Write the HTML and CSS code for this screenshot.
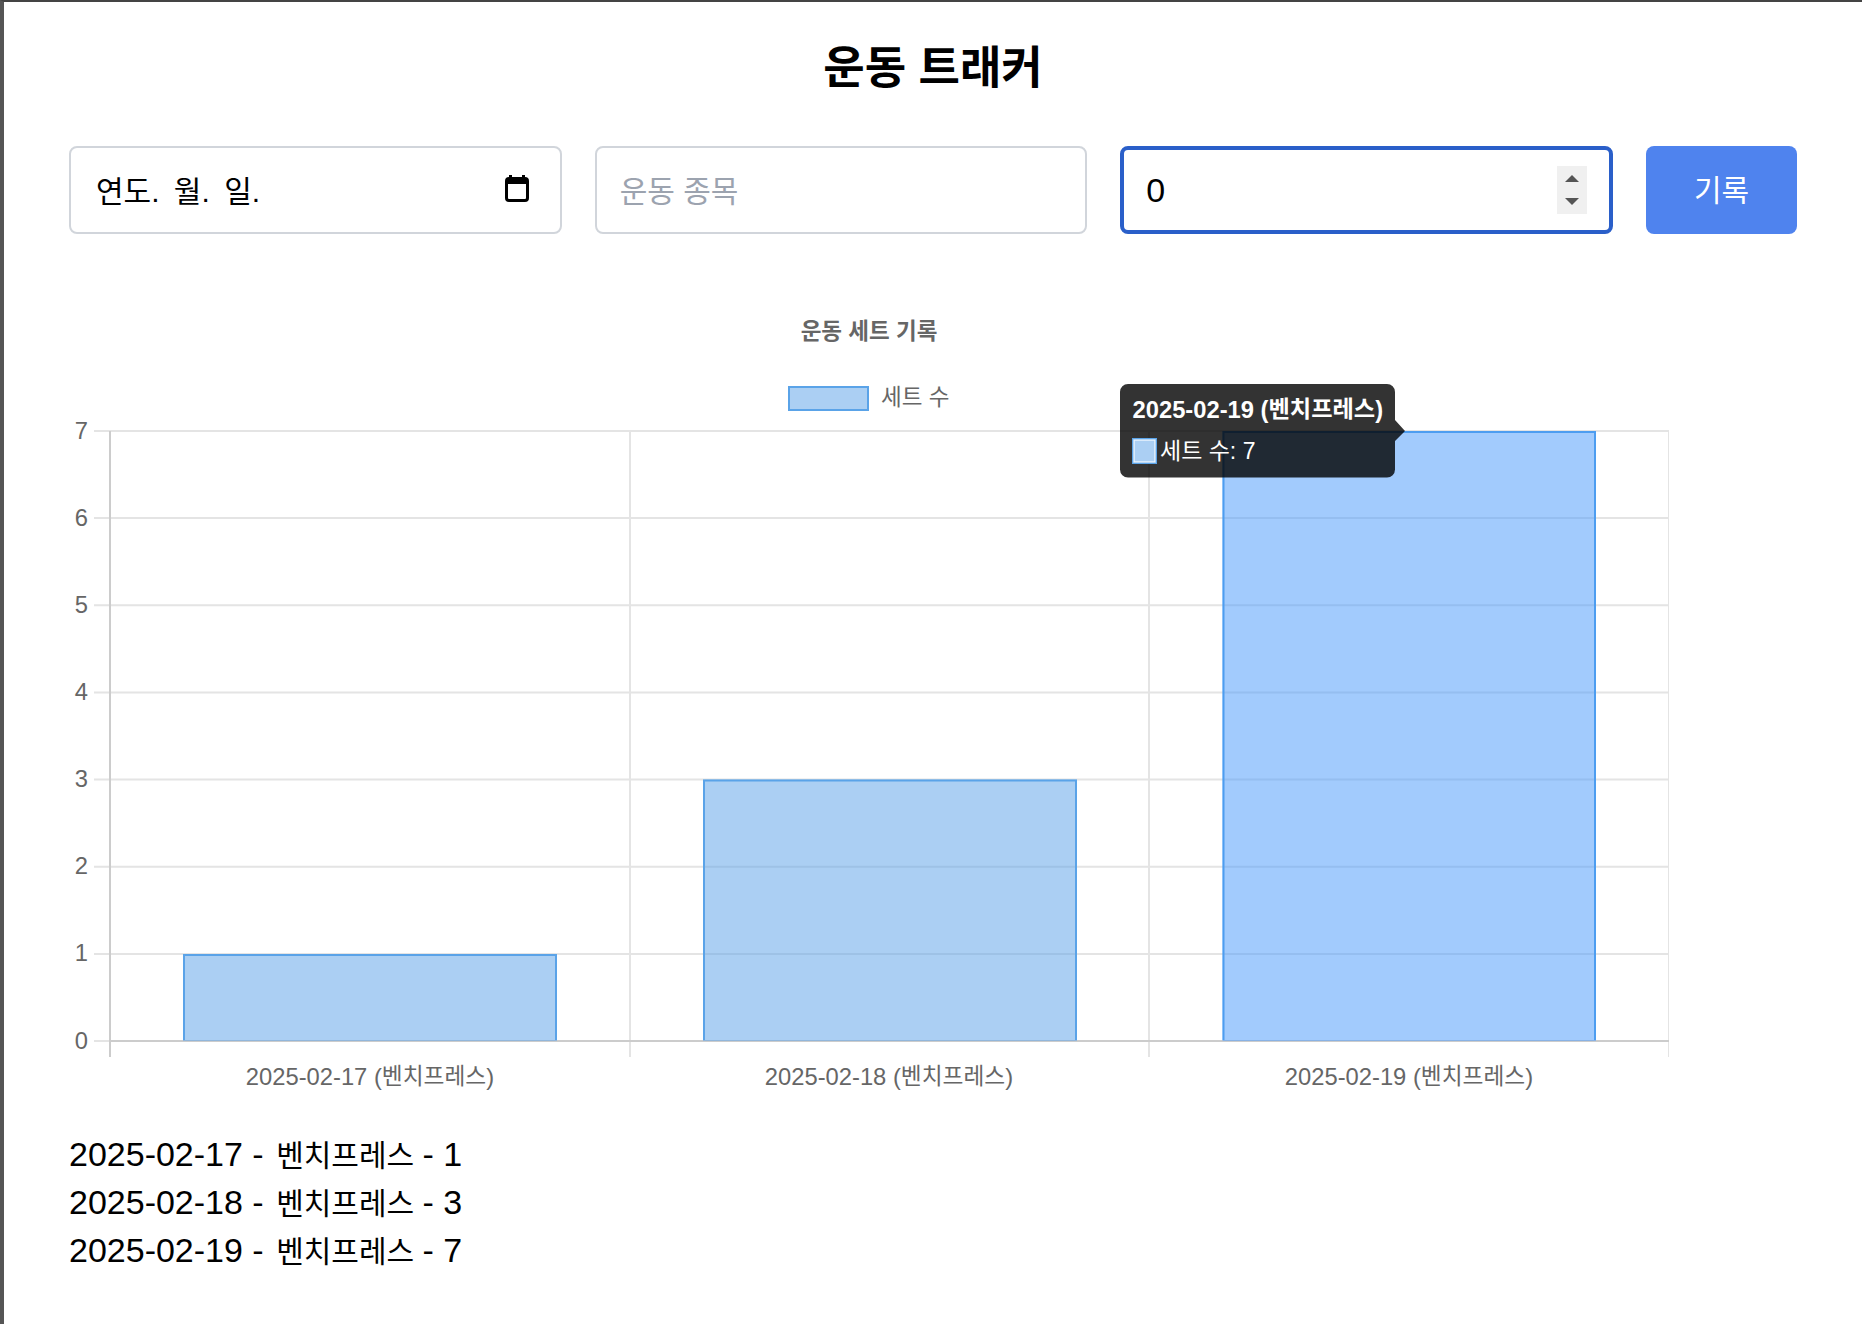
FILE: index.html
```html
<!DOCTYPE html>
<html lang="ko">
<head>
    <meta charset="UTF-8">
    <meta name="viewport" content="width=device-width, initial-scale=1.0">
    <title>운동 트래커</title>
    <link rel="stylesheet" href="styles.css">
</head>
<body>

<div class="container">
    <h1>운동 트래커</h1>

    <!-- 입력 폼 -->
    <form class="entry-form">
        <label class="field">
            <input class="date-input" type="text" value="연도. 월. 일." aria-label="날짜">
            <svg class="calendar-icon" width="24" height="27" viewBox="0 0 24 27">
                <path d="M4 0h3v4H4zM17 0h3v4h-3z" fill="#000"/>
                <rect x="1.5" y="3.5" width="21" height="22" rx="2.5" fill="#fff" stroke="#000" stroke-width="3"/>
                <rect x="1.5" y="3.5" width="21" height="5.5" fill="#000"/>
            </svg>
        </label>
        <label class="field name-field">
            <input type="text" placeholder="운동 종목">
        </label>
        <label class="field focused">
            <input class="number-input" type="text" value="0" aria-label="세트 수">
            <span class="spinner">
                <svg width="14" height="7" viewBox="0 0 14 7"><path d="M7 0l7 7H0z" fill="#555"/></svg>
                <svg width="14" height="7" viewBox="0 0 14 7"><path d="M0 0h14L7 7z" fill="#555"/></svg>
            </span>
        </label>
        <button type="button" class="submit-btn">기록</button>
    </form>

    <!-- 차트 -->
    <svg class="chart" width="1600" height="800" viewBox="0 0 1600 800">
        <text class="chart-title" x="800" y="31">운동 세트 기록</text>

        <rect class="bar" x="720" y="87" width="79" height="23"/>
        <text class="legend-label" x="812" y="97">세트 수</text>

        <g class="grid">
            <path d="M25 131H1600M25 218.1H1600M25 305.3H1600M25 392.4H1600M25 479.6H1600M25 566.7H1600M25 653.9H1600M25 741H41"/>
            <path d="M561 131V757M1080 131V757"/>
            <path class="grid-end" d="M1599.5 131V757"/>
        </g>
        <path class="axis" d="M41 131V757M40 741H1600"/>

        <g class="ticks-y">
            <text x="19" y="130">7</text>
            <text x="19" y="217.1">6</text>
            <text x="19" y="304.3">5</text>
            <text x="19" y="391.4">4</text>
            <text x="19" y="478.6">3</text>
            <text x="19" y="565.7">2</text>
            <text x="19" y="652.9">1</text>
            <text x="19" y="740">0</text>
        </g>

        <g class="ticks-x">
            <text x="301" y="776">2025-02-17 (<tspan class="ko">벤치프레스</tspan>)</text>
            <text x="820" y="776">2025-02-18 (<tspan class="ko">벤치프레스</tspan>)</text>
            <text x="1340" y="776">2025-02-19 (<tspan class="ko">벤치프레스</tspan>)</text>
        </g>

        <rect class="bar-fill" x="114" y="654" width="374" height="87"/>
        <path class="bar-line" d="M115 740V655H487V740"/>
        <rect class="bar-fill" x="634" y="479.6" width="374" height="261.4"/>
        <path class="bar-line" d="M635 740V480.6H1007V740"/>
        <rect class="bar-fill hover" x="1153.5" y="131" width="373.5" height="610"/>
        <path class="bar-line hover" d="M1154.5 740V132H1526V740"/>

        <!-- 툴팁 -->
        <path class="tooltip-box" d="M1059 84H1318a8 8 0 0 1 8 8V120L1336 131L1326 141V169.5a8 8 0 0 1-8 8H1059a8 8 0 0 1-8-8V92a8 8 0 0 1 8-8z"/>
        <text class="tooltip-title" x="1063.5" y="109">2025-02-19 (<tspan class="ko">벤치프레스</tspan>)</text>
        <rect class="tooltip-swatch-outer" x="1063" y="138" width="25" height="26"/>
        <rect class="tooltip-swatch" x="1065" y="140" width="21" height="22"/>
        <text class="tooltip-label" x="1091" y="151">세트 수: 7</text>
    </svg>

    <!-- 기록 목록 -->
    <ul class="log-list">
        <li>2025-02-17 - <span class="ko">벤치프레스</span> - 1</li>
        <li>2025-02-18 - <span class="ko">벤치프레스</span> - 3</li>
        <li>2025-02-19 - <span class="ko">벤치프레스</span> - 7</li>
    </ul>
</div>

</body>
</html>
```

FILE: styles.css
```css
* {
    box-sizing: border-box;
}

html, body {
    height: 100%;
}

body {
    margin: 0;
    background-color: #fff;
    border-top: 2px solid #444;
    border-left: 4px solid #555;
    font-family: "Liberation Sans", "Noto Sans CJK KR", sans-serif;
    overflow: hidden;
}

.container {
    padding: 0 65px;
}

h1 {
    margin: 0;
    padding-top: 37px;
    height: 144px;
    font-size: 45px;
    line-height: 60px;
    font-weight: 700;
    text-align: center;
    color: #000;
}

.entry-form {
    display: grid;
    grid-template-columns: repeat(3, minmax(0, 1fr)) 151px;
    gap: 33px;
    height: 88px;
}

.field {
    display: flex;
    align-items: center;
    padding: 0 25px;
    background-color: #fff;
    border: 2px solid #d1d5db;
    border-radius: 8px;
}

.field input {
    flex: 1;
    min-width: 0;
    border: 0;
    padding: 0;
    outline: none;
    background: transparent;
    font: inherit;
    font-size: 30px;
    color: #000;
}

.field input::placeholder {
    color: #9ca3af;
}

.field .date-input {
    word-spacing: 6px;
    padding-bottom: 2px;
}

.name-field {
    padding: 0 23px;
}

.name-field input {
    padding-top: 4px;
}

.field .number-input {
    font-size: 34px;
}

.calendar-icon {
    margin-right: 6px;
    margin-top: -3px;
}

.field.focused {
    border: 4px solid #2a5fc9;
    padding: 0 22px;
}

.spinner {
    display: flex;
    flex-direction: column;
    align-items: center;
    gap: 16px;
    width: 30px;
    height: 48px;
    padding-top: 9px;
    background-color: #f0f0f0;
}

.spinner svg {
    display: block;
}

.submit-btn {
    border: 0;
    border-radius: 8px;
    padding-bottom: 6px;
    background-color: #4f83ee;
    color: #fff;
    font: inherit;
    font-size: 30px;
}

.chart {
    display: block;
    margin-top: 66px;
}

.chart text {
    font-size: 23.75px;
    fill: #666;
}

.chart .ko {
    font-size: 22.7px;
}

.chart .chart-title {
    font-size: 22.5px;
    font-weight: 700;
    text-anchor: middle;
    dominant-baseline: central;
}

.chart .legend-label {
    font-size: 22.5px;
    dominant-baseline: central;
}

.bar {
    fill: #abcff3;
    stroke: #5aa3e8;
    stroke-width: 2;
}

.grid path {
    fill: none;
    stroke: #e4e4e4;
    stroke-width: 2;
}

.grid .grid-end {
    stroke-width: 1;
}

.axis {
    fill: none;
    stroke: #ccc;
    stroke-width: 2;
}

.ticks-y text {
    text-anchor: end;
    dominant-baseline: central;
}

.ticks-x text {
    text-anchor: middle;
    dominant-baseline: central;
}

.bar-fill {
    fill: rgba(87, 159, 231, 0.5);
}

.bar-fill.hover {
    fill: rgba(69, 151, 251, 0.5);
}

.bar-line {
    fill: none;
    stroke: #5aa3e8;
    stroke-width: 2;
}

.bar-line.hover {
    stroke: #4d9df0;
}

.tooltip-box {
    fill: rgba(0, 0, 0, 0.8);
}

.chart .tooltip-title {
    font-weight: 700;
    fill: #fff;
    dominant-baseline: central;
}

.chart .tooltip-title .ko {
    font-size: 23.2px;
    fill: #fff;
}

.chart .tooltip-label {
    font-size: 23px;
    fill: #fff;
    dominant-baseline: central;
}

.tooltip-swatch-outer {
    fill: #5aa3e8;
}

.tooltip-swatch {
    fill: #abcff3;
    stroke: #fff;
    stroke-width: 1.5;
    stroke-opacity: 0.75;
}

.log-list {
    list-style: none;
    margin: 30px 0 0;
    padding: 0;
    font-size: 34px;
    line-height: 48px;
    color: #000;
}

.log-list .ko {
    font-size: 30px;
    line-height: 1;
    margin: 0 -1px 0 3px;
}
```
